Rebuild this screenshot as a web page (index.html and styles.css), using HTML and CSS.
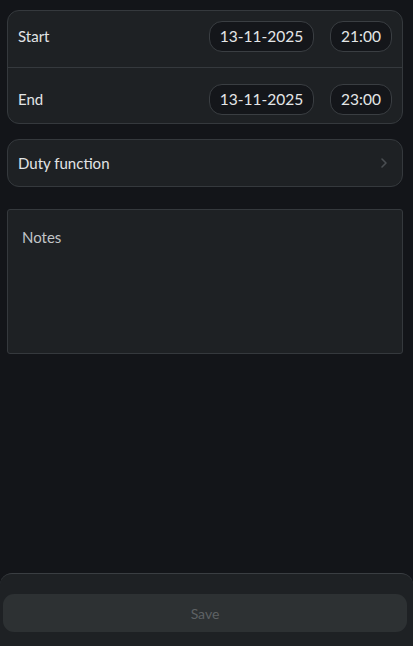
FILE: index.html
```html
<!DOCTYPE html>
<html>
<head>
<meta charset="utf-8">
<link rel="stylesheet" href="styles.css">
</head>
<body>
<div class="page">
  <main class="content">
    <section class="card times">
      <div class="row first">
        <span class="label">Start</span>
        <div class="pills">
          <span class="pill date">13-11-2025</span>
          <span class="pill time">21:00</span>
        </div>
      </div>
      <div class="row second">
        <span class="label">End</span>
        <div class="pills">
          <span class="pill date">13-11-2025</span>
          <span class="pill time">23:00</span>
        </div>
      </div>
    </section>
    <section class="card select">
      <span class="label">Duty function</span>
      <svg class="chev" width="8" height="12" viewBox="0 0 8 12"><path d="M2 2l4 4-4 4" fill="none" stroke="#4a4e52" stroke-width="1.6" stroke-linecap="round" stroke-linejoin="round"/></svg>
    </section>
    <section class="notes">
      <span class="placeholder">Notes</span>
    </section>
  </main>
  <footer class="sheet">
    <button class="save">Save</button>
  </footer>
</div>
</body>
</html>
```
FILE: styles.css
```css
* { box-sizing: border-box; }
html, body { margin: 0; padding: 0; }
body {
  background: #131519;
  font-family: Lato, "Noto Sans", sans-serif;
  color: #e4e6e8;
  width: 413px;
  height: 646px;
  overflow: hidden;
}
.page {
  display: flex;
  flex-direction: column;
  height: 646px;
}
.content {
  flex: 1;
  display: flex;
  flex-direction: column;
  padding: 10px 10px 0 7px;
}
.card {
  background: #1e2124;
  border: 1px solid #35393d;
  border-radius: 12px;
}
.times { display: flex; flex-direction: column; }
.row {
  display: flex;
  align-items: center;
  justify-content: space-between;
  padding: 0 10px 0 10px;
}
.row.first { height: 56px; padding-bottom: 6px; }
.row.second { height: 56px; padding-top: 7px; border-top: 1px solid #35393d; }
.label { font-size: 15px; color: #e2e4e6; }
.pills { display: flex; gap: 16px; }
.pill {
  display: flex;
  align-items: center;
  justify-content: center;
  height: 31px;
  background: #14161a;
  border: 1px solid #3a3e42;
  border-radius: 13px;
  font-size: 15.5px;
  color: #e4e6e8;
}
.date { width: 105px; }
.time { width: 62px; }
.select {
  margin-top: 15px;
  height: 48px;
  display: flex;
  align-items: center;
  justify-content: space-between;
  padding: 0 14px 0 10px;
}
.notes {
  margin-top: 22px;
  height: 145px;
  background: #1e2124;
  border: 1px solid #35393d;
  border-radius: 3px;
  padding: 17px 14px;
}
.placeholder { font-size: 15px; color: #c2c5c8; }
.sheet {
  height: 73px;
  background: #1e2124;
  border-top: 1px solid #3a3e42;
  border-radius: 12px 12px 0 0;
  padding: 20px 6px 0 3px;
}
.save {
  width: 100%;
  height: 38px;
  border: none;
  border-radius: 11px;
  background: #2d3133;
  color: #5e6264;
  font-family: Lato, "Noto Sans", sans-serif;
  font-size: 14px;
}
```
